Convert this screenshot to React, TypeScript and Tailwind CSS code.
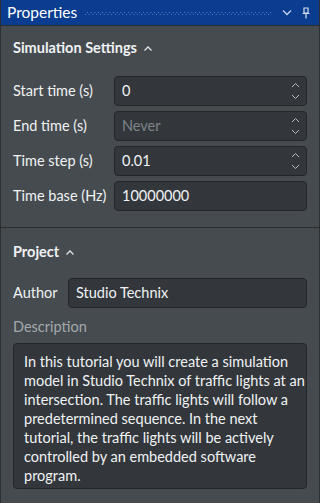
import React from "react";

const Spin = () => (
  <div className="flex flex-col items-center justify-between h-full py-[5px] pr-[6px]">
    <svg width="9" height="6" viewBox="0 0 9 6"><path d="M1 5 L4.5 1.5 L8 5" fill="none" stroke="#b8bcc0" strokeWidth="1" /></svg>
    <svg width="9" height="6" viewBox="0 0 9 6"><path d="M1 1 L4.5 4.5 L8 1" fill="none" stroke="#b8bcc0" strokeWidth="1" /></svg>
  </div>
);

const Row = ({ label, value, placeholder, spin }: { label: string; value?: string; placeholder?: string; spin?: boolean }) => (
  <div className="flex items-center h-[30px]">
    <div className="w-[101px] text-[14.5px] text-[#f0f2f4] whitespace-nowrap">{label}</div>
    <div className="flex-1 h-[30px] rounded-[4px] bg-[#33373b] border border-[#24272a] flex items-center justify-between pl-[7px]">
      <span className={value ? "text-[14.5px] text-[#f0f2f4]" : "text-[14.5px] text-[#7e8489]"}>{value ?? placeholder}</span>
      {spin && <Spin />}
    </div>
  </div>
);

const Caret = () => (
  <svg width="10" height="7" viewBox="0 0 10 7" className="ml-[6px]"><path d="M1.5 5.5 L5 2 L8.5 5.5" fill="none" stroke="#dfe2e5" strokeWidth="1.3" /></svg>
);

export default function App() {
  return (
    <div className="w-[320px] h-[503px] bg-[#464b4f] border-x border-[#2c2f32] flex flex-col overflow-hidden" style={{ fontFamily: "Lato, 'Noto Sans', sans-serif" }}>
      <div className="h-[26px] bg-[#0a3c8f] border-b border-[#2c2f32] flex items-center pl-[6px] pr-[8px] shrink-0">
        <span className="text-[15.5px] text-white leading-none">Properties</span>
        <svg className="ml-[8px] flex-1" height="6" viewBox="0 0 200 6" preserveAspectRatio="none">
          <defs>
            <pattern id="dots" width="4" height="4" patternUnits="userSpaceOnUse">
              <rect x="0" y="0" width="1" height="1" fill="#5f86c6" />
              <rect x="2" y="2" width="1" height="1" fill="#5f86c6" />
            </pattern>
          </defs>
          <rect x="0" y="1" width="200" height="4" fill="url(#dots)" />
        </svg>
        <svg width="10" height="7" viewBox="0 0 10 7" className="ml-[10px]"><path d="M1 1.5 L5 5.5 L9 1.5" fill="none" stroke="#c8d4ea" strokeWidth="1.3" /></svg>
        <svg width="10" height="12" viewBox="0 0 10 12" className="ml-[9px]">
          <path d="M3 1 H7 V6 H3 Z M1.5 6.5 H8.5 M5 7 V11.5" fill="none" stroke="#d6e0f0" strokeWidth="1.2" />
        </svg>
      </div>

      <div className="px-[12px] pt-[12px] pb-[16px] border-b border-[#2c2f32]">
        <div className="h-[20px] flex items-center text-[14.5px] font-bold text-[#f0f2f4]">Simulation Settings<Caret /></div>
        <div className="mt-[18px] flex flex-col gap-[5px]">
          <Row label="Start time (s)" value="0" spin />
          <Row label="End time (s)" placeholder="Never" spin />
          <Row label="Time step (s)" value="0.01" spin />
          <Row label="Time base (Hz)" value="10000000" />
        </div>
      </div>

      <div className="px-[12px] pt-[14px]">
        <div className="h-[20px] flex items-center text-[14.5px] font-bold text-[#f0f2f4]">Project<Caret /></div>
        <div className="mt-[16px] flex items-center h-[30px]">
          <div className="w-[55px] text-[14.5px] text-[#f0f2f4]">Author</div>
          <div className="flex-1 h-[30px] rounded-[4px] bg-[#33373b] border border-[#24272a] flex items-center pl-[7px]">
            <span className="text-[14.5px] text-[#f0f2f4]">Studio Technix</span>
          </div>
        </div>
        <div className="mt-[9px] text-[14.5px] text-[#a4a9ad] h-[20px] flex items-center">Description</div>
        <div className="mt-[6px] rounded-[4px] bg-[#33373b] border border-[#24272a] pl-[10px] pr-[4px] pt-[8px] pb-[10px] h-[146px] text-[14.5px] leading-[19px] text-[#f0f2f4] whitespace-nowrap">
          <div>In this tutorial you will create a simulation</div>
          <div>model in Studio Technix of traffic lights at an</div>
          <div>intersection. The traffic lights will follow a</div>
          <div>predetermined sequence. In the next</div>
          <div>tutorial, the traffic lights will be actively</div>
          <div>controlled by an embedded software</div>
          <div>program.</div>
        </div>
      </div>
    </div>
  );
}
